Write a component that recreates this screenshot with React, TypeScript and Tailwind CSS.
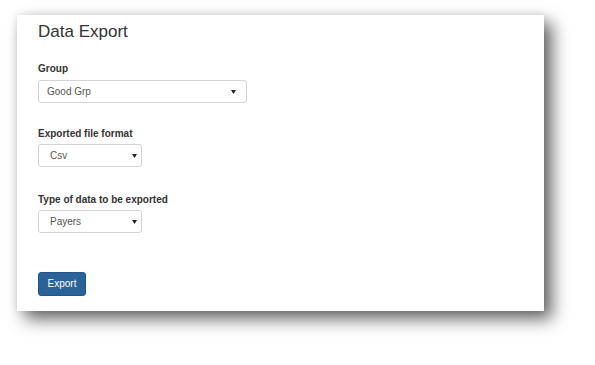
import React from "react";

function Arrow() {
  return (
    <svg width="5" height="4" viewBox="0 0 5 4" className="shrink-0">
      <path d="M0 0 L5 0 L2.5 4 Z" fill="#222" />
    </svg>
  );
}

function FakeSelect({
  value,
  widthClass,
  padClass,
}: {
  value: string;
  widthClass: string;
  padClass: string;
}) {
  return (
    <div
      className={`${widthClass} ${padClass} h-[23px] flex items-center justify-between border border-[#d4d4d4] rounded-[3px] bg-white text-[10px] text-[#555] leading-none`}
    >
      <span>{value}</span>
      <Arrow />
    </div>
  );
}

export default function App() {
  return (
    <div
      className="w-[595px] h-[365px] bg-white overflow-hidden"
      style={{ fontFamily: '"Liberation Sans", Arial, sans-serif' }}
    >
      <div className="ml-[17px] mt-[15px] w-[527px] h-[296px] bg-white pl-[21px] pt-[7px] flex flex-col items-start shadow-[0_0_8px_rgba(0,0,0,0.10),8px_8px_16px_rgba(0,0,0,0.6)]">
        <h1 className="text-[17px] leading-[20px] text-[#333] font-normal">Data Export</h1>

        <div className="mt-[21px] text-[10px] leading-[12px] font-bold text-[#333]">Group</div>
        <div className="mt-[5px]">
          <FakeSelect value="Good Grp" widthClass="w-[209px]" padClass="pl-[8px] pr-[10px]" />
        </div>

        <div className="mt-[25px] text-[10px] leading-[12px] font-bold text-[#333]">Exported file format</div>
        <div className="mt-[4px]">
          <FakeSelect value="Csv" widthClass="w-[104px]" padClass="pl-[11px] pr-[4px]" />
        </div>

        <div className="mt-[27px] text-[10px] leading-[12px] font-bold text-[#333]">Type of data to be exported</div>
        <div className="mt-[4px]">
          <FakeSelect value="Payers" widthClass="w-[104px]" padClass="pl-[11px] pr-[4px]" />
        </div>

        <button className="mt-[39px] w-[48px] h-[24px] rounded-[3px] bg-[#2a6398] border border-[#23578a] text-white text-[10px] leading-none flex items-center justify-center">
          Export
        </button>
      </div>
    </div>
  );
}
